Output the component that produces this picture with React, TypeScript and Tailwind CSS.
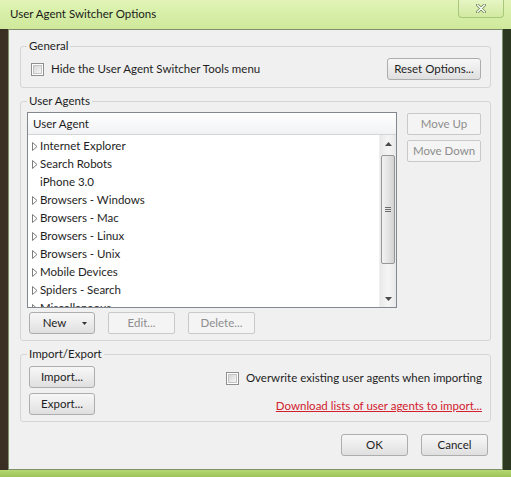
import React from "react";

const font = { fontFamily: 'Lato, "Noto Sans", sans-serif' };

const items = [
  { name: "Internet Explorer", group: true },
  { name: "Search Robots", group: true },
  { name: "iPhone 3.0", group: false },
  { name: "Browsers - Windows", group: true },
  { name: "Browsers - Mac", group: true },
  { name: "Browsers - Linux", group: true },
  { name: "Browsers - Unix", group: true },
  { name: "Mobile Devices", group: true },
  { name: "Spiders - Search", group: true },
  { name: "Miscellaneous", group: true },
];

function Button({
  children,
  disabled,
  className = "",
}: {
  children: React.ReactNode;
  disabled?: boolean;
  className?: string;
}) {
  return (
    <button
      className={
        disabled
          ? `h-[22px] rounded-[2px] border border-[#c9c9c9] bg-[#f4f4f4] text-[#8d8d8d] flex items-center justify-center ${className}`
          : `h-[22px] rounded-[3px] border border-[#adadad] bg-gradient-to-b from-[#f7f7f7] via-[#ececec] to-[#dfdfdf] text-[#1e1e1e] flex items-center justify-center ${className}`
      }
    >
      {children}
    </button>
  );
}

function Checkbox() {
  return (
    <div className="w-[13px] h-[13px] border border-[#8e8f8f] bg-white p-[1px] shrink-0">
      <div className="w-full h-full border border-[#c4c4c4] bg-gradient-to-br from-[#d6d6d6] to-[#f6f6f6]" />
    </div>
  );
}

function Triangle() {
  return (
    <svg width="6" height="9" viewBox="0 0 6 9" className="shrink-0">
      <polygon points="0.5,0.5 5,4.5 0.5,8.5" fill="#fff" stroke="#7d7d7d" strokeWidth="1" />
    </svg>
  );
}

function ScrollBar() {
  return (
    <div className="w-[17px] h-full flex flex-col bg-gradient-to-r from-[#e9e9e9] via-[#f5f5f5] to-[#e9e9e9] border-l border-[#f0f0f0]">
      <div className="h-[17px] flex items-center justify-center">
        <svg width="7" height="4" viewBox="0 0 7 4">
          <polygon points="0,4 3.5,0 7,4" fill="#4a4a4a" />
        </svg>
      </div>
      <div className="mt-[3px] mx-[1px] h-[109px] rounded-[2px] border border-[#979797] bg-gradient-to-r from-[#f2f2f2] via-[#e4e4e4] to-[#d2d2d2] flex items-center justify-center">
        <div className="flex flex-col gap-[1px]">
          <div className="w-[6px] h-[1px] bg-[#6e6e6e]" />
          <div className="w-[6px] h-[1px] bg-[#6e6e6e]" />
          <div className="w-[6px] h-[1px] bg-[#6e6e6e]" />
        </div>
      </div>
      <div className="flex-1" />
      <div className="h-[17px] flex items-center justify-center">
        <svg width="7" height="4" viewBox="0 0 7 4">
          <polygon points="0,0 3.5,4 7,0" fill="#4a4a4a" />
        </svg>
      </div>
    </div>
  );
}

export default function App() {
  return (
    <div
      className="w-[511px] h-[477px] flex flex-col overflow-hidden text-[11.5px] leading-[16px] text-[#1e1e1e] bg-gradient-to-r from-[#3a2e22] via-[#5f7a3a] to-[#2c3820]"
      style={font}
    >
      {/* Title bar */}
      <div className="h-[29px] shrink-0 flex items-start justify-between bg-gradient-to-b from-[#e2f4b8] via-[#d6eea6] to-[#cfe99c]">
        <div className="pl-[10px] pt-[6px] text-[11.5px] text-[#1a1a1a]">User Agent Switcher Options</div>
        <div className="mr-[7px] w-[46px] h-[18px] rounded-b-[4px] border border-t-0 border-[#a9c77a] bg-gradient-to-b from-[#e6f5c4] to-[#d2eaa0] flex items-center justify-center">
          <svg width="10" height="9" viewBox="0 0 10 9">
            <path d="M1.5 1 L8.5 8 M8.5 1 L1.5 8" stroke="#6f8a52" strokeWidth="3" strokeLinecap="round" />
            <path d="M1.5 1 L8.5 8 M8.5 1 L1.5 8" stroke="#ffffff" strokeWidth="1.4" strokeLinecap="round" />
          </svg>
        </div>
      </div>

      <div className="flex-1 flex">
        <div className="w-[8px] shrink-0" />
        {/* Client area */}
        <div className="w-[495px] h-[441px] border border-[#7f8f6a] bg-[#f0f0f0] px-[11px] pt-[8px] flex flex-col">
          {/* General */}
          <fieldset className="border border-[#d5d5d5] rounded-[3px] pl-[10px] pr-[9px] pt-[4px] pb-[7px]">
            <legend className="-ml-[4px] px-[2px]">General</legend>
            <div className="flex items-center justify-between">
              <div className="flex items-center gap-[7px]">
                <Checkbox />
                <span>Hide the User Agent Switcher Tools menu</span>
              </div>
              <Button className="w-[94px]">Reset Options...</Button>
            </div>
          </fieldset>

          {/* User Agents */}
          <fieldset className="mt-[5px] border border-[#d5d5d5] rounded-[3px] pl-[6px] pr-[9px] pt-[3px] pb-[6px]">
            <legend className="ml-0 px-[2px]">User Agents</legend>
            <div className="flex justify-between">
              <div className="flex flex-col">
                <div className="w-[370px] h-[196px] border border-[#828790] bg-white flex flex-col">
                  <div className="h-[22px] shrink-0 flex items-center pl-[5px] bg-gradient-to-b from-[#ffffff] to-[#f1f2f4] border-b border-[#d5d5d5]">
                    User Agent
                  </div>
                  <div className="flex-1 flex overflow-hidden">
                    <div className="flex-1 pt-[2px] overflow-hidden">
                      {items.map((it) => (
                        <div key={it.name} className="h-[18px] flex items-center pl-[4px] gap-[2px]">
                          {it.group ? <Triangle /> : <div className="w-[6px]" />}
                          <span>{it.name}</span>
                        </div>
                      ))}
                    </div>
                    <ScrollBar />
                  </div>
                </div>
                <div className="mt-[4px] ml-[2px] flex gap-[13px]">
                  <Button className="w-[66px] gap-[16px] pl-[6px]">
                    <span>New</span>
                    <svg width="5" height="3" viewBox="0 0 5 3">
                      <polygon points="0,0 5,0 2.5,3" fill="#333" />
                    </svg>
                  </Button>
                  <Button disabled className="w-[67px]">Edit...</Button>
                  <Button disabled className="w-[67px]">Delete...</Button>
                </div>
              </div>
              <div className="flex flex-col gap-[5px] pt-[1px]">
                <Button disabled className="w-[74px]">Move Up</Button>
                <Button disabled className="w-[74px]">Move Down</Button>
              </div>
            </div>
          </fieldset>

          {/* Import/Export */}
          <fieldset className="mt-[5px] border border-[#d5d5d5] rounded-[3px] pl-[8px] pr-[8px] pt-[4px] pb-[6px]">
            <legend className="-ml-[2px] px-[2px]">Import/Export</legend>
            <div className="flex justify-between">
              <div className="flex flex-col gap-[5px]">
                <Button className="w-[66px]">Import...</Button>
                <Button className="w-[66px]">Export...</Button>
              </div>
              <div className="flex flex-col items-end pt-[4px]">
                <div className="flex items-center gap-[7px]">
                  <Checkbox />
                  <span>Overwrite existing user agents when importing</span>
                </div>
                <a className="mt-[12px] text-[#d2202e] underline">Download lists of user agents to import...</a>
              </div>
            </div>
          </fieldset>

          {/* Dialog buttons */}
          <div className="mt-[12px] pr-[3px] flex justify-end gap-[13px]">
            <Button className="w-[67px]">OK</Button>
            <Button className="w-[67px]">Cancel</Button>
          </div>
        </div>
        <div className="w-[8px] shrink-0" />
      </div>
      <div className="h-[7px] shrink-0 bg-gradient-to-b from-[#b5d872] to-[#9cc45a]" />
    </div>
  );
}
